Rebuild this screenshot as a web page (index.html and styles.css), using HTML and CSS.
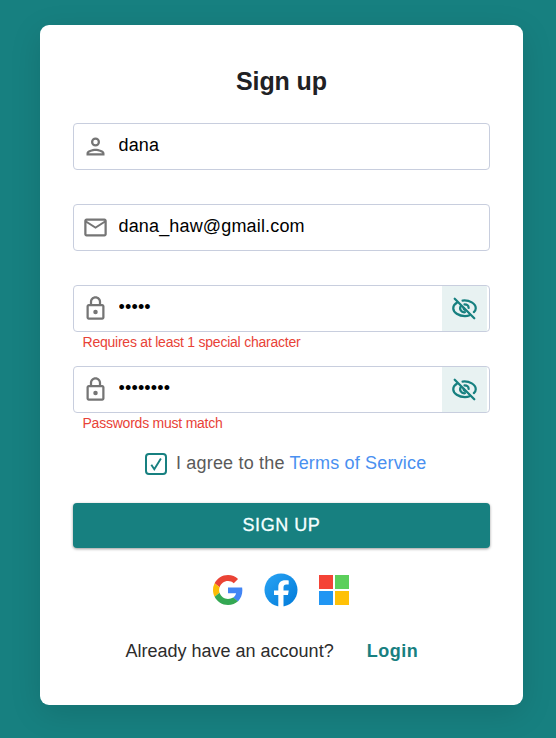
FILE: index.html
```html
<!DOCTYPE html>
<html lang="en">
<head>
<meta charset="utf-8">
<title>Sign up</title>
<link rel="stylesheet" href="styles.css">
</head>
<body>
<svg width="0" height="0" class="defs">
  <symbol id="lock" viewBox="0 0 24 24"><path d="M18 8h-1V6c0-2.760-2.240-5-5-5S7 3.240 7 6v2H6c-1.100 0-2 .9-2 2v10c0 1.100.9 2 2 2h12c1.100 0 2-.9 2-2V10c0-1.100-.9-2-2-2zM9 6c0-1.660 1.340-3 3-3s3 1.340 3 3v2H9V6zm9 14H6V10h12v10z"/><circle cx="12" cy="15" r="2"/></symbol>
  <symbol id="eye-off" viewBox="0 0 24 24"><g fill="none" stroke="currentColor" stroke-width="2" stroke-linecap="round" stroke-linejoin="round"><path d="M3.300 3.300 20.700 20.700"/><path d="M10.300 4.900C16.500 4.200 22 7.800 22 11.700c0 1.400-.6 2.500-1.700 3.500"/><path d="M5.400 6.700C3.200 8.100 2 9.800 2 11.700c0 3.800 4.800 7 10.400 7 1.500 0 2.900-.2 4.100-.7"/><path d="M8.800 9.700c-1.800 2.900.3 6 3.600 5.600"/><path d="M12 8.400c2.200 0 3.600 1.300 3.700 3.100"/><path d="M11.200 11.700c0 .8.400 1.300 1.200 1.500"/></g></symbol>
</svg>
<main class="card">
  <h1>Sign up</h1>
  <form>
    <div class="field">
      <svg class="icon" viewBox="0 0 24 24"><path d="M12 6a2 2 0 1 1 0 4 2 2 0 0 1 0-4m0 10c2.700 0 5.800 1.290 6 2H6c.23-.72 3.310-2 6-2m0-12a4 4 0 1 0 0 8 4 4 0 0 0 0-8zm0 10c-2.670 0-8 1.340-8 4v2h16v-2c0-2.660-5.330-4-8-4z"/></svg>
      <input type="text" value="dana" aria-label="Username">
    </div>
    <p class="error"></p>
    <div class="field">
      <svg class="icon" viewBox="0 0 24 24"><path d="M22 6c0-1.100-.9-2-2-2H4c-1.100 0-2 .9-2 2v12c0 1.100.9 2 2 2h16c1.100 0 2-.9 2-2V6zm-2 0-8 5-8-5h16zm0 12H4V8l8 5 8-5v10z"/></svg>
      <input type="text" value="dana_haw@gmail.com" aria-label="Email">
    </div>
    <p class="error"></p>
    <div class="field">
      <svg class="icon"><use href="#lock"/></svg>
      <input type="password" value="abcde" aria-label="Password">
      <button type="button" class="reveal" aria-label="Show password"><svg><use href="#eye-off"/></svg></button>
    </div>
    <p class="error">Requires at least 1 special character</p>
    <div class="field">
      <svg class="icon"><use href="#lock"/></svg>
      <input type="password" value="abcdefgh" aria-label="Confirm password">
      <button type="button" class="reveal" aria-label="Show password"><svg><use href="#eye-off"/></svg></button>
    </div>
    <p class="error">Passwords must match</p>
    <div class="terms">
      <span class="check"><svg viewBox="0 0 18 18"><path d="m4.300 9.800 3 4.400 6.600-10.700"/></svg></span>
      <span class="agree">I agree to the <a href="#">Terms of Service</a></span>
    </div>
    <button type="button" class="submit">SIGN UP</button>
  </form>
  <div class="social">
    <svg class="google" viewBox="0 0 48 48"><path fill="#EA4335" d="M24 9.500c3.540 0 6.710 1.220 9.210 3.600l6.850-6.850C35.900 2.380 30.470 0 24 0 14.620 0 6.510 5.380 2.560 13.220l7.980 6.190C12.430 13.720 17.740 9.500 24 9.500z"/><path fill="#4285F4" d="M46.980 24.550c0-1.570-.15-3.090-.38-4.550H24v9.020h12.940c-.58 2.960-2.260 5.480-4.780 7.180l7.730 6c4.510-4.180 7.090-10.360 7.090-17.650z"/><path fill="#FBBC05" d="M10.530 28.590A14.500 14.500 0 0 1 9.770 24c0-1.600.27-3.140.76-4.590l-7.980-6.190A23.900 23.900 0 0 0 0 24c0 3.880.92 7.540 2.560 10.780l7.970-6.190z"/><path fill="#34A853" d="M24 48c6.480 0 11.930-2.130 15.890-5.810l-7.730-6c-2.150 1.450-4.920 2.300-8.160 2.300-6.260 0-11.570-4.220-13.470-9.910l-7.980 6.190C6.510 42.620 14.620 48 24 48z"/></svg>
    <svg class="facebook" viewBox="0 0 34 34"><defs><linearGradient id="fb" x1="0" y1="0" x2="1" y2="1"><stop offset="0" stop-color="#2aa4f4"/><stop offset="1" stop-color="#007ad9"/></linearGradient></defs><circle cx="17" cy="17" r="16.500" fill="url(#fb)"/><path fill="#fff" d="M19.500 34V21.900h4.500l.7-4.500h-5.200v-3c0-1.900.9-2.900 2.700-2.900h2.500V7.600c-1-.2-2.300-.3-3.400-.3-4.500 0-7 2.500-7 6.700v3.400H10v4.500h4.300V34z"/></svg>
    <svg class="microsoft" viewBox="0 0 30 30"><path fill="#f44336" d="M0 0h14v14H0z"/><path fill="#5bcf5b" d="M16 0h14v14H16z"/><path fill="#2196f3" d="M0 16h14v14H0z"/><path fill="#ffc107" d="M16 16h14v14H16z"/></svg>
  </div>
  <div class="footer"><span>Already have an account?</span><a href="#">Login</a></div>
</main>
</body>
</html>
```
FILE: styles.css
```css
* { box-sizing: border-box; }
body {
  margin: 0;
  height: 738px;
  padding: 25px 0 0 40px;
  overflow: hidden;
  background: #178080;
  font-family: "Liberation Sans", Arial, sans-serif;
}
.defs { position: absolute; }
a { text-decoration: none; }
.card {
  width: 483px;
  height: 680px;
  padding: 42px 33px 0;
  border-radius: 9px;
  background: #fff;
  box-shadow: 0 8px 32px rgba(0, 0, 0, .12);
}
h1 {
  margin: 0 0 27px;
  font-size: 25px;
  line-height: 29px;
  letter-spacing: -.1px;
  text-align: center;
  color: #202124;
}
.field {
  display: flex;
  align-items: center;
  height: 47px;
  padding-left: 8px;
  border: 1px solid #c8cede;
  border-radius: 4px;
}
.icon { width: 27px; height: 27px; fill: #757575; }
.field input {
  flex: 1;
  min-width: 0;
  height: 27px;
  margin: 0 0 3px;
  padding: 0 0 0 9.500px;
  border: 0;
  outline: 0;
  background: none;
  font: 18px "Liberation Sans", Arial, sans-serif;
  letter-spacing: .16px;
  color: #000;
}
.reveal {
  display: flex;
  align-items: center;
  justify-content: center;
  width: 45px;
  height: 45px;
  margin-right: 2px;
  padding: 0;
  border: 0;
  background: #e8f2f2;
  color: #178080;
}
.reveal svg { width: 27px; height: 27px; }
.error {
  height: 34px;
  margin: 0;
  padding: 2px 0 0 9.500px;
  font-size: 14px;
  line-height: 17px;
  letter-spacing: -.23px;
  color: #e84237;
}
.terms {
  display: flex;
  align-items: center;
  gap: 9px;
  height: 22px;
  margin: 6px 0 28px 72px;
}
.check {
  width: 22px;
  height: 22px;
  border: 2px solid #178080;
  border-radius: 4px;
}
.check svg { display: block; width: 18px; height: 18px; fill: none; stroke: #178080; stroke-width: 1.900; }
.agree { font-size: 18px; line-height: 22px; letter-spacing: .18px; color: #5a5a5a; margin-top: -2px; white-space: nowrap; }
.agree a { color: #4a90f0; }
.submit {
  display: block;
  width: 100%;
  height: 45px;
  padding: 0 0 1px;
  border: 0;
  border-radius: 4px;
  background: #178080;
  box-shadow: 0 1px 3px rgba(0, 0, 0, .4);
  font: 18px "Liberation Sans", Arial, sans-serif;
  letter-spacing: .55px;
  color: #f4ffff;
  -webkit-text-stroke: .3px #f4ffff;
}
.social {
  display: flex;
  align-items: center;
  justify-content: center;
  height: 34px;
  margin: 25px 2px 0 0;
}
.google { width: 30px; height: 30px; }
.facebook { width: 34px; height: 34px; margin: 0 21px; }
.microsoft { width: 30px; height: 30px; }
.footer {
  display: flex;
  gap: 33px;
  margin: 33px 0 0 52.500px;
  font-size: 18px;
  line-height: 22px;
  color: #2c2c2c;
}
.footer a { font-weight: 700; letter-spacing: .5px; color: #178080; }
```
